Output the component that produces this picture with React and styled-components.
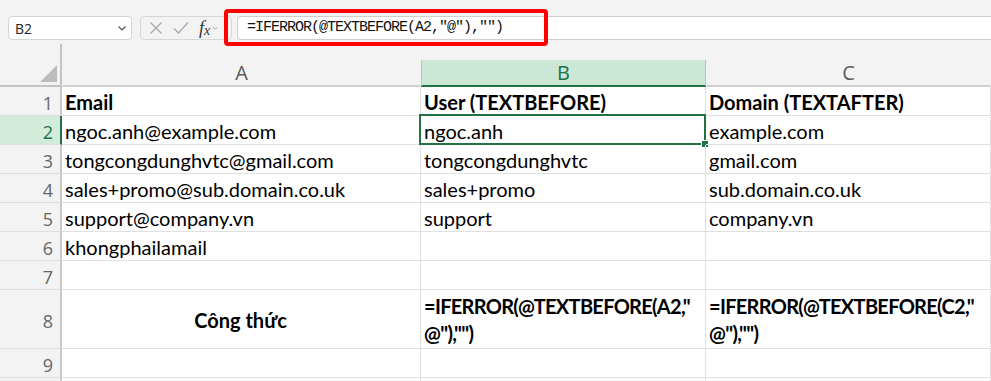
import React from 'react';
import styled, { createGlobalStyle } from 'styled-components';

const GlobalStyle = createGlobalStyle`
  html, body {
    margin: 0;
    padding: 0;
    background: #fff;
  }
  body {
    overflow: hidden;
  }
`;

const COLUMNS = '62px 359px 285px 285px';
const GREEN = '#217346';

const Sheet = styled.div`
  position: relative;
  width: 991px;
  height: 381px;
  overflow: hidden;
  background: #f3f3f3;
  font-family: 'Lato', sans-serif;
`;

const FormulaBar = styled.div`
  display: flex;
  align-items: flex-start;
  height: 44px;
  padding: 16px 0 0 8px;
  box-sizing: border-box;
`;

const NameBox = styled.div`
  display: flex;
  align-items: center;
  justify-content: space-between;
  width: 124px;
  height: 24px;
  box-sizing: border-box;
  padding: 0 3px 0 6px;
  background: #fff;
  border: 1px solid #d4d4d4;
  border-radius: 4px;
  font-family: 'Open Sans', sans-serif;
  font-size: 14px;
  color: #222;
`;

const FxBox = styled.div`
  display: flex;
  align-items: center;
  width: 92px;
  height: 24px;
  margin-left: 8px;
  padding-left: 8px;
  box-sizing: border-box;
  border: 1px solid #d6d6d6;
  border-radius: 4px;
  gap: 10px;
`;

const FxLabel = styled.span`
  display: flex;
  align-items: center;
  font-family: 'Liberation Serif', serif;
  font-style: italic;
  font-size: 18px;
  line-height: 20px;
  color: #333;

  sub {
    font-size: 14px;
    line-height: 1;
    margin: 6px 1px 0 0;
  }
`;

const FormulaInput = styled.div`
  flex: 1;
  height: 24px;
  margin-left: 5px;
  padding-left: 9px;
  box-sizing: border-box;
  background: #fff;
  border: 1px solid #cfcfcf;
  border-right: none;
  border-radius: 4px 0 0 4px;
  font-family: 'Liberation Mono', monospace;
  font-size: 15px;
  letter-spacing: -1px;
  line-height: 22px;
  color: #111;
  white-space: nowrap;
`;

const Highlight = styled.div`
  position: absolute;
  left: 224px;
  top: 9px;
  width: 324px;
  height: 37px;
  box-sizing: border-box;
  border: 4px solid #ff0000;
  border-radius: 4px;
  pointer-events: none;
`;

const HeaderRow = styled.div`
  display: grid;
  grid-template-columns: ${COLUMNS};
  height: 43px;
`;

const Corner = styled.div`
  position: relative;
  border-right: 2px solid #c4c4c4;
  border-bottom: 2px solid #c4c4c4;

  svg {
    position: absolute;
    right: 3px;
    bottom: 3px;
  }
`;

const ColumnHeader = styled.div`
  align-self: end;
  display: flex;
  align-items: center;
  justify-content: center;
  height: 27px;
  box-sizing: border-box;
  font-family: 'Open Sans', sans-serif;
  font-size: 20px;
  color: ${({ $active }) => ($active ? GREEN : '#5b5b5b')};
  background: ${({ $active }) => ($active ? '#cae8d5' : 'transparent')};
  border-left: 1px solid ${({ $active }) => ($active ? '#9fd0b2' : 'transparent')};
  border-right: 1px solid ${({ $active }) => ($active ? '#9fd0b2' : 'transparent')};
  border-bottom: 2px solid ${({ $active }) => ($active ? GREEN : '#cfcfcf')};
`;

const Grid = styled.div`
  display: grid;
  grid-template-columns: ${COLUMNS};
  grid-template-rows: repeat(7, 29px) 59px 29px 29px;
  background: #fff;
`;

const RowHeader = styled.div`
  display: flex;
  align-items: center;
  justify-content: flex-end;
  padding: 4px 7px 0 0;
  box-sizing: border-box;
  background: ${({ $active }) => ($active ? '#d2ebdb' : '#f3f3f3')};
  border-right: 2px solid ${({ $active }) => ($active ? GREEN : '#c8c8c8')};
  border-bottom: 1px solid #dedede;
  font-family: 'Open Sans', sans-serif;
  font-size: 18px;
  color: ${({ $active }) => ($active ? GREEN : '#666')};
`;

const Cell = styled.div`
  position: relative;
  display: flex;
  align-items: ${({ $center }) => ($center ? 'center' : 'flex-end')};
  justify-content: ${({ $center }) => ($center ? 'center' : 'flex-start')};
  min-width: 0;
  padding: ${({ $center }) => ($center ? '2px 4px 0 3px' : '0 4px 1px 3px')};
  box-sizing: border-box;
  border-right: 1px solid #e0e0e0;
  border-bottom: 1px solid #e0e0e0;
  font-size: 20px;
  line-height: ${({ $wrap }) => ($wrap ? '27px' : '24px')};
  letter-spacing: ${({ $wrap }) => ($wrap ? '-0.7px' : 'normal')};
  font-weight: ${({ $bold }) => ($bold ? 700 : 400)};
  color: #000;
  white-space: nowrap;
`;

const Selection = styled.span`
  position: absolute;
  top: -2px;
  left: -2px;
  right: -1px;
  bottom: -1px;
  border: 2px solid ${GREEN};
  pointer-events: none;
`;

const FillHandle = styled.span`
  position: absolute;
  right: -5px;
  bottom: -5px;
  width: 6px;
  height: 6px;
  background: ${GREEN};
  border: 1px solid #fff;
`;

const Chevron = ({ size = 12, color = '#555' }) => (
  <svg width={size} height={size} viewBox="0 0 12 12">
    <path d="M2.5 4.5 L6 8 L9.5 4.5" fill="none" stroke={color} strokeWidth="1.2" />
  </svg>
);

const CancelIcon = () => (
  <svg width="14" height="14" viewBox="0 0 14 14">
    <path d="M1.5 1.5 L12.5 12.5 M12.5 1.5 L1.5 12.5" stroke="#a9a9a9" strokeWidth="1.3" />
  </svg>
);

const EnterIcon = () => (
  <svg width="16" height="14" viewBox="0 0 16 14">
    <path d="M1 7.5 L5.5 12 L15 1.5" fill="none" stroke="#a9a9a9" strokeWidth="1.3" />
  </svg>
);

const rows = [
  { label: 1, cells: ['Email', 'User (TEXTBEFORE)', 'Domain (TEXTAFTER)'], bold: true },
  { label: 2, cells: ['ngoc.anh@example.com', 'ngoc.anh', 'example.com'], active: true },
  { label: 3, cells: ['tongcongdunghvtc@gmail.com', 'tongcongdunghvtc', 'gmail.com'] },
  { label: 4, cells: ['sales+promo@sub.domain.co.uk', 'sales+promo', 'sub.domain.co.uk'] },
  { label: 5, cells: ['support@company.vn', 'support', 'company.vn'] },
  { label: 6, cells: ['khongphailamail', '', ''] },
  { label: 7, cells: ['', '', ''] },
  {
    label: 8,
    cells: [
      'Công thức',
      <>=IFERROR(@TEXTBEFORE(A2,"<br />@"),"")</>,
      <>=IFERROR(@TEXTBEFORE(C2,"<br />@"),"")</>,
    ],
    bold: true,
    formula: true,
  },
  { label: 9, cells: ['', '', ''] },
  { label: '', cells: ['', '', ''] },
];

const App = () => (
  <>
    <GlobalStyle />
    <Sheet>
      <FormulaBar>
        <NameBox>
          <span>B2</span>
          <Chevron />
        </NameBox>
        <FxBox>
          <CancelIcon />
          <EnterIcon />
          <FxLabel>
            f<sub>x</sub>
            <Chevron size={8} color="#999" />
          </FxLabel>
        </FxBox>
        <FormulaInput>=IFERROR(@TEXTBEFORE(A2,"@"),"")</FormulaInput>
      </FormulaBar>
      <Highlight />

      <HeaderRow>
        <Corner>
          <svg width="17" height="17" viewBox="0 0 17 17">
            <polygon points="17,0 17,17 0,17" fill="#bdbdbd" />
          </svg>
        </Corner>
        <ColumnHeader>A</ColumnHeader>
        <ColumnHeader $active>B</ColumnHeader>
        <ColumnHeader>C</ColumnHeader>
      </HeaderRow>

      <Grid>
        {rows.map((row, r) => (
          <React.Fragment key={r}>
            <RowHeader $active={row.active}>{row.label}</RowHeader>
            {row.cells.map((value, c) => (
              <Cell
                key={c}
                $bold={row.bold}
                $center={row.formula && c === 0}
                $wrap={row.formula && c > 0}
              >
                {value}
                {row.active && c === 1 && (
                  <Selection>
                    <FillHandle />
                  </Selection>
                )}
              </Cell>
            ))}
          </React.Fragment>
        ))}
      </Grid>
    </Sheet>
  </>
);

export default App;
